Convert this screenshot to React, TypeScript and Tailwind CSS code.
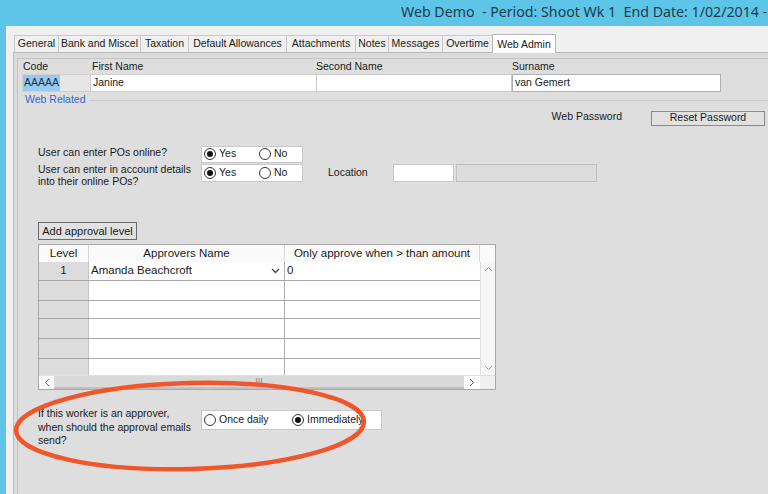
import React from "react";

const Radio = ({ checked, label, className = "" }: { checked?: boolean; label: string; className?: string }) => (
  <div className={"flex items-center gap-[3px] " + className}>
    <span className="w-[12px] h-[12px] rounded-full border border-[#333] bg-white flex items-center justify-center">
      {checked && <span className="w-[6px] h-[6px] rounded-full bg-[#111]" />}
    </span>
    <span>{label}</span>
  </div>
);

const tabs = ["General", "Bank and Miscel", "Taxation", "Default Allowances", "Attachments", "Notes", "Messages", "Overtime"];
const tabW = [44, 82, 48, 98, 69, 33, 54, 50];

export default function App() {
  const rows = [19, 20, 19, 20, 20, 16];
  return (
    <div className="relative w-[768px] h-[494px] overflow-hidden bg-[#5dc6e8] text-[#1a1a1a]" style={{ fontFamily: '"Liberation Sans", Arial, sans-serif' }}>
      {/* title bar */}
      <div className="h-[24px] flex items-center pl-[401px] whitespace-pre text-[14.2px] text-[#1d3c4c]" style={{ fontFamily: '"Noto Sans", "Open Sans", sans-serif' }}>
        Web Demo  - Period: Shoot Wk 1  End Date: 1/02/2014 -
      </div>
      {/* window body */}
      <div className="absolute left-[6px] top-[26px] right-0 bottom-0 bg-[#f0f0f0] border-l border-white pl-[6px] pt-[7px]">
        {/* tabs */}
        <div className="flex items-end h-[19px] text-[10.5px] pl-[1px]">
          {tabs.map((t, i) => (
            <div key={t} style={{ width: tabW[i] }} className="h-[17px] flex items-center justify-center border-l border-t border-[#c8c8c8] bg-[#f0f0f0] whitespace-nowrap">
              {t}
            </div>
          ))}
          <div className="w-[64px] h-[19px] flex items-start pt-[2px] justify-center border-l border-t border-r border-[#b8b8b8] bg-white whitespace-nowrap -mb-[1px] relative z-10">
            Web Admin
          </div>
        </div>
        {/* panel */}
        <div className="h-[460px] border-t border-l border-[#b8b8b8] bg-[#dcdcdc] pl-[3px] pt-[5px]">
          <div className="h-full border-l border-t border-[#c4c4c4] bg-[#dedede] pl-[4px] relative">
            {/* name header */}
            <div className="flex text-[10.5px] h-[15px] items-center">
              <div className="w-[70px] pl-[1px]">Code</div>
              <div className="w-[224px]">First Name</div>
              <div className="w-[196px]">Second Name</div>
              <div>Surname</div>
            </div>
            <div className="flex text-[10.5px] h-[18px]">
              <div className="w-[69px] flex items-center bg-[#e6e6e6] border border-[#d0d0d0]">
                <span className="bg-[#99c9ef] text-[#14324d] px-[1px]">AAAAA</span>
              </div>
              <div className="w-[225px] bg-white border-y border-[#d0d0d0] flex items-center pl-[2px]">Janine</div>
              <div className="w-[196px] bg-white border border-[#c8c8c8] flex items-center pl-[2px]"></div>
              <div className="w-[209px] bg-white border border-[#b0b0b0] flex items-center pl-[2px]">van Gemert</div>
            </div>
            {/* Web Related group */}
            <div className="flex items-center mt-[2px] h-[12px]">
              <span className="text-[10.5px] text-[#3366cc] pl-[3px] pr-[3px]">Web Related</span>
              <div className="flex-1 border-t border-[#c8c8c8] mt-[1px]" />
            </div>
            <div className="flex justify-end items-center mt-[4px] h-[16px] text-[10.5px] pr-[3px]">
              <span className="mr-[29px] -mt-[2px]">Web Password</span>
              <div className="w-[114px] h-[15px] border border-[#8a8a8a] bg-[#e1e1e1] flex items-center justify-center">Reset Password</div>
            </div>
            {/* PO questions */}
            <div className="mt-[19px] pl-[16px] text-[10.5px]">
              <div className="flex items-center h-[18px]">
                <div className="w-[163px] -mt-[2px]">User can enter POs online?</div>
                <div className="w-[102px] h-[17px] bg-white border border-[#c8c8c8] flex items-center pl-[2px]">
                  <Radio checked label="Yes" className="w-[55px]" />
                  <Radio label="No" />
                </div>
              </div>
              <div className="flex items-start h-[24px] mt-[1px]">
                <div className="w-[163px] leading-[12px] -mt-[1px]">
                  User can enter in account details<br />into their online POs?
                </div>
                <div className="w-[102px] h-[18px] bg-white border border-[#c8c8c8] flex items-center pl-[2px]">
                  <Radio checked label="Yes" className="w-[55px]" />
                  <Radio label="No" />
                </div>
                <div className="ml-[25px] mt-[1px] w-[65px]">Location</div>
                <div className="w-[61px] h-[18px] bg-white border border-[#c8c8c8]" />
                <div className="ml-[2px] w-[141px] h-[18px] bg-[#dcdcdc] border border-[#c0c0c0]" />
              </div>
            </div>
            {/* Add approval level */}
            <div className="mt-[34px] ml-[16px] w-[99px] h-[18px] border border-[#6a6a6a] bg-[#e1e1e1] flex items-center justify-center text-[11px]">
              Add approval level
            </div>
            {/* grid */}
            <div className="ml-[16px] mt-[4px] w-[458px] h-[146px] border border-[#a8a8a8] bg-white text-[11.5px] flex flex-col" style={{ fontFamily: '"Liberation Sans", Arial, sans-serif' }}>
              <div className="flex h-[17px] bg-[#fafafa]">
                <div className="w-[50px] flex items-center justify-center border-r border-[#d8d8d8]">Level</div>
                <div className="w-[196px] flex items-center justify-center border-r border-[#d8d8d8]">Approvers Name</div>
                <div className="w-[195px] flex items-center justify-center border-r border-[#d8d8d8]">Only approve when &gt; than amount</div>
                <div className="flex-1" />
              </div>
              <div className="flex h-[113px]">
                <div className="w-[441px] flex flex-col">
                  {rows.map((h, i) => (
                    <div key={i} style={{ height: h }} className={"flex " + (i < rows.length - 1 ? "border-b border-[#a8a8a8]" : "")}>
                      <div className="w-[50px] bg-[#dcdcdc] border-r border-[#c4c4c4] flex items-center justify-center">{i === 0 ? "1" : ""}</div>
                      <div className="w-[196px] border-r border-[#b0b0b0] flex items-center justify-between pl-[2px] pr-[4px]">
                        {i === 0 && (
                          <>
                            <span>Amanda Beachcroft</span>
                            <svg width="9" height="6" viewBox="0 0 9 6"><path d="M1 1 L4.5 4.5 L8 1" stroke="#444" strokeWidth="1.3" fill="none" /></svg>
                          </>
                        )}
                      </div>
                      <div className="w-[195px] flex items-center pl-[2px]">{i === 0 ? "0" : ""}</div>
                    </div>
                  ))}
                </div>
                <div className="flex-1 border-l border-[#e0e0e0] bg-[#f7f7f7] flex flex-col justify-between items-center py-[4px]">
                  <svg width="9" height="6" viewBox="0 0 9 6"><path d="M1 5 L4.5 1.5 L8 5" stroke="#999" strokeWidth="1" fill="none" /></svg>
                  <svg width="9" height="6" viewBox="0 0 9 6"><path d="M1 1 L4.5 4.5 L8 1" stroke="#999" strokeWidth="1" fill="none" /></svg>
                </div>
              </div>
              <div className="flex h-[16px] border-t border-[#e0e0e0]">
                <div className="w-[441px] flex bg-[#f0f0f0]">
                  <div className="w-[15px] bg-white flex items-center justify-center">
                    <svg width="6" height="9" viewBox="0 0 6 9"><path d="M5 1 L1.5 4.5 L5 8" stroke="#666" strokeWidth="1" fill="none" /></svg>
                  </div>
                  <div className="flex-1 bg-[#dadada] border-b-[2px] border-[#c0c0c0] flex items-center justify-center text-[9px] text-[#888] leading-none">III</div>
                  <div className="w-[16px] bg-white flex items-center justify-center">
                    <svg width="6" height="9" viewBox="0 0 6 9"><path d="M1 1 L4.5 4.5 L1 8" stroke="#666" strokeWidth="1" fill="none" /></svg>
                  </div>
                </div>
                <div className="flex-1 bg-[#f0f0f0]" />
              </div>
            </div>
            {/* approval emails */}
            <div className="mt-[17px] ml-[16px] flex items-start text-[10.5px]">
              <div className="w-[163px] leading-[13.5px]">
                If this worker is an approver,<br />when should the approval emails<br />send?
              </div>
              <div className="mt-[3px] w-[181px] h-[20px] bg-white border border-[#c8c8c8] flex items-center pl-[2px]">
                <Radio label="Once daily" className="w-[88px]" />
                <Radio checked label="Immediately" />
              </div>
            </div>
          </div>
        </div>
      </div>
      {/* red ellipse annotation */}
      <svg className="absolute left-0 top-0 pointer-events-none" width="768" height="494" viewBox="0 0 768 494">
        <ellipse cx="190" cy="426" rx="174" ry="43" transform="rotate(-1.5 190 426)" fill="none" stroke="#f0562a" strokeWidth="4.5" />
      </svg>
    </div>
  );
}
